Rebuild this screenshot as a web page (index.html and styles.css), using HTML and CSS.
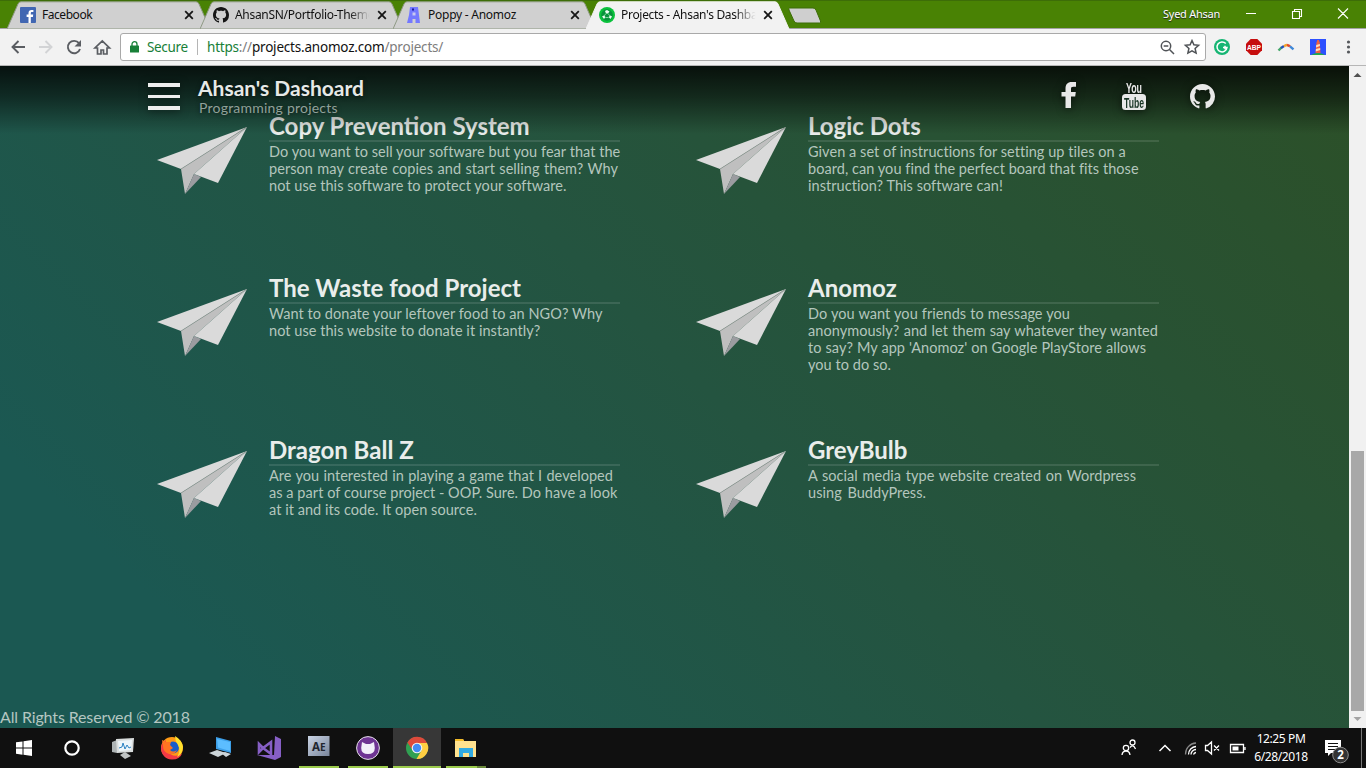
FILE: index.html
```html
<!DOCTYPE html>
<html lang="en">
<head>
<meta charset="utf-8">
<title>Projects - Ahsan's Dashboard</title>
<link rel="stylesheet" href="styles.css">
</head>
<body>
<svg class="defs" width="0" height="0">
  <defs>
    <symbol id="tab" viewBox="0 0 204 28"><path d="M0 28 11 3Q12 .8 14 .8H189Q191 .8 192 3L203 28Z"/></symbol>
    <symbol id="x" viewBox="0 0 10 10"><path d="M1.2 1.2 8.8 8.8M8.8 1.2 1.2 8.8" fill="none" stroke="#161616" stroke-width="1.8"/></symbol>
    <symbol id="github" viewBox="0 0 16 16"><path d="M8 0C3.58 0 0 3.58 0 8c0 3.54 2.29 6.53 5.47 7.59.4.07.55-.17.55-.38 0-.19-.01-.82-.01-1.49-2.01.37-2.53-.49-2.69-.94-.09-.23-.48-.94-.82-1.13-.28-.15-.68-.52-.01-.53.63-.01 1.08.58 1.23.82.72 1.21 1.87.87 2.33.66.07-.52.28-.87.51-1.07-1.78-.2-3.64-.89-3.64-3.95 0-.87.31-1.59.82-2.15-.08-.2-.36-1.02.08-2.12 0 0 .67-.21 2.2.82.64-.18 1.32-.27 2-.27s1.36.09 2 .27c1.53-1.04 2.2-.82 2.2-.82.44 1.1.16 1.92.08 2.12.51.56.82 1.27.82 2.15 0 3.07-1.87 3.75-3.65 3.95.29.25.54.73.54 1.48 0 1.07-.01 1.93-.01 2.2 0 .21.15.46.55.38A8.01 8.01 0 0 0 16 8c0-4.42-3.58-8-8-8z"/></symbol>
    <symbol id="plane" viewBox="0 0 90 67">
      <path d="M0 33 90 0 24 42Z" fill="#dadada"/>
      <path d="M24 42 90 0 37 47 28 67Z" fill="#bfbfbf"/>
      <path d="M37 47 44 50 28 67Z" fill="#9b9ca0"/>
      <path d="M90 0 37 47 61 56Z" fill="#dadada"/>
      <path d="M24 42 90 0" stroke="#87918c" stroke-width=".6"/>
    </symbol>
  </defs>
</svg>

<header class="tabstrip">
  <div class="tab"><svg class="shape"><use href="#tab"/></svg>
    <svg class="fav" viewBox="0 0 16 16"><rect width="16" height="16" rx="1" fill="#4167b2"/><path d="M8.500 16V10H6.600V7.600h1.900V6c0-2 1.200-3.100 3-3.100l1.900.1v2.100H12c-1 0-1.200.5-1.200 1.200v1.300h2.400l-.3 2.400h-2.100v6z" fill="#fff"/></svg>
    <span class="label t1">Facebook</span><svg class="close"><use href="#x"/></svg></div>
  <div class="tab"><svg class="shape"><use href="#tab"/></svg>
    <svg class="fav" viewBox="0 0 16 16"><use href="#github" fill="#151515"/></svg>
    <span class="label fade t2">AhsanSN/Portfolio-Theme</span><svg class="close"><use href="#x"/></svg></div>
  <div class="tab"><svg class="shape"><use href="#tab"/></svg>
    <svg class="fav" viewBox="0 0 16 16"><path d="M4 0h8l1 8 1 8H9.500v-4h-3v4H1L3 8z" fill="#7479ff"/><rect x="6.500" y="5.500" width="3" height="3" fill="#c9caf0"/><rect x="6" y="1.500" width="2" height="2" fill="#1c1b9c"/></svg>
    <span class="label t3">Poppy - Anomoz</span><svg class="close"><use href="#x"/></svg></div>
  <div class="tab active"><svg class="shape"><use href="#tab"/></svg>
    <svg class="fav" viewBox="0 0 16 16"><circle cx="8" cy="8" r="8" fill="#0ac23c"/><circle cx="8" cy="8" r="5.800" fill="#07933a"/><path d="M3 9.500 5 8.500 6.500 10 5 12zM9.500 10l2-1.500 1.500 1-1.500 2.500zM6 4l2-1 2.500 1.500L9 6.500H7z" fill="#e9fff0"/><path d="M7 6.500 5 9M9 6.500 11 9M6.500 10.500h3" stroke="#9be8b4" stroke-width=".8"/></svg>
    <span class="label fade t4">Projects - Ahsan's Dashbaord</span><svg class="close"><use href="#x"/></svg></div>
  <svg class="newtab" viewBox="0 0 34 17"><path d="M1.500 1H25q2 0 3 2l4.500 11q.5 2-1 2H9q-2 0-3-2L1 3Q.5 1 1.500 1Z" fill="#cfcfcf" stroke="#3d6d08"/></svg>
  <span class="user">Syed Ahsan</span>
  <svg class="winctl" viewBox="0 0 104 14"><g fill="none" stroke="#fff" stroke-width="1.100"><path d="M0 7.500h10M46.500 5.500h7v7h-7zM48.500 5.500v-2h7v7h-2M92 2.500l10 10M102 2.500l-10 10"/></g></svg>
</header>

<nav class="toolbar">
  <svg class="navicons" viewBox="0 0 104 20">
    <path d="M17 10H4.500M10.500 4 4.500 10l6 6" class="ni"/>
    <path d="M31 10h12.500M37.500 4l6 6-6 6" class="ni off"/>
    <path d="M71 6.200A6.200 6.200 0 1 0 72 12" class="ni"/><path d="M73 3v6.500h-6.500z" fill="#5a5d62"/>
    <path d="M87 11h2.500v6h3.500v-4h2.500v4h3.500v-6h2.500L94.300 4z" class="ni thin"/>
  </svg>
  <div class="omnibox">
    <svg class="lock" viewBox="0 0 9 12"><rect y="4.500" width="9" height="7" rx=".6" fill="#188038"/><path d="M2 5V3.200a2.500 2.500 0 0 1 5 0V5" fill="none" stroke="#188038" stroke-width="1.300"/></svg>
    <span class="secure">Secure</span><span class="sep"></span>
    <span class="url"><span class="https">https</span><span class="dim">://</span>projects.anomoz.com<span class="dim">/projects/</span></span>
    <svg class="omni-icons" viewBox="0 0 42 18"><g fill="none" stroke="#505357" stroke-width="1.500"><circle cx="7" cy="8" r="4.700"/><path d="M10.500 11.500 15 16M4.700 8h4.600M33 2.500l1.900 4.300 4.700.5-3.500 3.200 1 4.600L33 12.800l-4.100 2.300 1-4.600-3.500-3.200 4.700-.5z"/></g></svg>
  </div>
  <svg class="ext" viewBox="0 0 150 20">
    <circle cx="9" cy="10" r="8" fill="#16b573"/><path d="M12.800 6.600A5 5 0 1 0 14 10.500h-4M12 8.800v3.400" fill="none" stroke="#fff" stroke-width="1.500"/>
    <path d="M37.700 2h6.600L49 6.700v6.600L44.300 18h-6.600L33 13.300V6.700z" fill="#c60d0d"/><text x="41" y="13" class="abp" textLength="14" lengthAdjust="spacingAndGlyphs">ABP</text>
    <g fill="none" stroke-width="2.400"><path d="M65.500 13.500l3-3" stroke="#43a668"/><path d="M68 11l3-2" stroke="#2454b8"/><path d="M71 9.200q2-1.200 3-1.200" stroke="#f3a32c"/><path d="M74 8q2 .3 3 1.500" stroke="#e34b2b"/><path d="M77 9.300l3.500 3" stroke="#4088d8"/></g>
    <rect x="97" y="2" width="16" height="16" fill="#2d50ff"/><path d="M98 18q7-4 14 0z" fill="#23aa49"/><path d="M103.500 5.500l.8-2.500h1.600l.8 2.500.8 10.500h-5z" fill="#ee6041"/><path d="M103.200 8l3.700-1v2l-3.900 1.500zM102.900 12l4.300-1v2l-4.500 1.500z" fill="#ffdcb8"/>
    <g fill="#55585c"><circle cx="135.500" cy="5" r="1.600"/><circle cx="135.500" cy="10" r="1.600"/><circle cx="135.500" cy="15" r="1.600"/></g>
  </svg>
</nav>

<div class="window">
  <main class="page">
    <div class="topbar">
      <div class="burger"><i></i><i></i><i></i></div>
      <div class="brand"><h1>Ahsan's Dashoard</h1><p>Programming projects</p></div>
      <div class="social">
        <svg class="s-fb" viewBox="0 0 16 26"><path d="M4.500 26V14.500H.5V10h4V6.500C4.500 2.300 6.700 0 10.600 0H15v4.700h-2.700c-1.900 0-2.300.8-2.300 2.300v3h4.800l-.6 4.500H10V26z"/></svg>
        <svg class="s-yt" viewBox="0 0 24 28"><text x="12" y="10.800" class="you" textLength="16" lengthAdjust="spacingAndGlyphs">You</text><rect y="12" width="24" height="16" rx="3.500"/><text x="12" y="25.500" class="tube" textLength="20" lengthAdjust="spacingAndGlyphs">Tube</text></svg>
        <svg class="s-gh" viewBox="0 0 16 16"><use href="#github"/></svg>
      </div>
    </div>
    <section class="projects">
      <article><svg class="plane"><use href="#plane"/></svg><div class="info"><h2>Copy Prevention System</h2>
        <p><span class="w351">Do you want to sell your software but you fear that the</span><span class="w349">person may create copies and start selling them? Why</span><span class="w295">not use this software to protect your software.</span></p></div></article>
      <article><svg class="plane"><use href="#plane"/></svg><div class="info"><h2>Logic Dots</h2>
        <p><span class="w316">Given a set of instructions for setting up tiles on a</span><span class="w329">board, can you find the perfect board that fits those</span><span class="w193">instruction? This software can!</span></p></div></article>
      <article><svg class="plane"><use href="#plane"/></svg><div class="info"><h2>The Waste food Project</h2>
        <p><span class="w329">Want to donate your leftover food to an NGO? Why</span><span class="w269">not use this website to donate it instantly?</span></p></div></article>
      <article><svg class="plane"><use href="#plane"/></svg><div class="info"><h2>Anomoz</h2>
        <p><span class="w262">Do you want you friends to message you</span><span class="w350">anonymously? and let them say whatever they wanted</span><span class="w338">to say? My app 'Anomoz' on Google PlayStore allows</span><span class="w82">you to do so.</span></p></div></article>
      <article><svg class="plane"><use href="#plane"/></svg><div class="info"><h2>Dragon Ball Z</h2>
        <p><span class="w344">Are you interested in playing a game that I developed</span><span class="w348">as a part of course project - OOP. Sure. Do have a look</span><span class="w207">at it and its code. It open source.</span></p></div></article>
      <article><svg class="plane"><use href="#plane"/></svg><div class="info"><h2>GreyBulb</h2>
        <p><span class="w328">A social media type website created on Wordpress</span><span class="w118">using BuddyPress.</span></p></div></article>
    </section>
    <footer>All Rights Reserved © 2018</footer>
  </main>
  <div class="scrollbar"><svg viewBox="0 0 17 17"><path d="M4.500 11 8.500 7l4 4z" fill="#505050"/></svg><div class="thumb"></div><svg viewBox="0 0 17 17"><path d="M4.500 6 8.500 10l4-4z" fill="#a3a3a3"/></svg></div>
</div>

<div class="taskbar">
  <div class="apps">
    <div><svg viewBox="0 0 24 24"><path d="M4 6.300 10.500 5.400V11.500H4zM11.500 5.200 20 4v7.500h-8.500zM4 12.500h6.500v6.200L4 17.800zM11.500 12.500H20V20l-8.500-1.200z" fill="#fff"/></svg></div>
    <div><svg viewBox="0 0 24 24"><circle cx="11" cy="12" r="6.700" fill="none" stroke="#fff" stroke-width="2.200"/></svg></div>
    <div><svg viewBox="0 0 24 24"><path d="M2 6l5-2v13l-5-1z" fill="#aeb4b5"/><path d="M6 3l18-1-1 14-16 1z" fill="#d9dddd"/><path d="M8 5l14-1-.7 10L9 15z" fill="#eef6fa"/><path d="M9 12l3-1 1-4 2 6 2-4 2 3 2-1" fill="none" stroke="#2c83c3"/><path d="M10 19l5-3 6 4-6 3z" fill="#bfc3c3"/></svg></div>
    <div><svg viewBox="0 0 24 24"><circle cx="13" cy="12" r="11" fill="#ff9a16"/><path d="M3 8a11 11 0 0 0 10 15.500q8 0 10-6-6 4-11 1L6 12l1-8z" fill="#f33a45"/><circle cx="14" cy="11.500" r="6" fill="#185dc9"/><path d="M3 4l4 2 5 0-1 3 3 3-3 2q3 3 7 0-2 5-8 4-6-2-6-8z" fill="#ff7422"/><path d="M16 0q7 4 8 11-1 8-6 10 4-6 1-12-3-4-3-9z" fill="#ffe12d"/></svg></div>
    <div><svg viewBox="0 0 24 24"><path d="M8 1l15 4v12L8 13z" fill="#3c9fe8"/><path d="M9 3l13 3v9L10 11.500z" fill="#5cbdff"/><path d="M1 17l8-3 9 3-8 4zM13 17l4-1 6 2-5 3z" fill="#cdd5d9"/></svg></div>
    <div><svg viewBox="0 0 24 24"><path d="M18 0l6 3v18l-6 3L0 19l17 0z" fill="#865fc5"/><path d="M2 8l4 4 8-6v12l-8-6-4 4z" fill="none" stroke="#865fc5" stroke-width="2.600"/></svg></div>
    <div class="open"><svg class="ae" viewBox="0 0 24 24"><defs><linearGradient id="aeg" x2="1" y2="1"><stop stop-color="#cad4e5"/><stop offset="1" stop-color="#79859a"/></linearGradient></defs><rect x="1" y="0" width="21.500" height="20" fill="url(#aeg)"/><text x="11.800" y="15">A<tspan font-size="10">E</tspan></text></svg></div>
    <div class="open"><svg viewBox="0 0 24 24"><circle cx="12" cy="12" r="11.400" fill="#6e3493" stroke="#e4e0e8"/><path d="M6 6l4 2h4l4-2 .8 6q0 6-6.800 6T5.200 12z" fill="#f2effa"/></svg></div>
    <div class="open current"><svg viewBox="0 0 24 24"><circle cx="12" cy="12" r="11" fill="#30a052"/><path d="M2.400 6.600A11 11 0 0 1 22 7H12l-4.500 7z" fill="#dd4a3b"/><path d="M22 7a11 11 0 0 1-10.500 16l5-8.500L12 7z" fill="#ffce42"/><circle cx="12" cy="12" r="5.300" fill="#f3f3f3"/><circle cx="12" cy="12" r="4.200" fill="#438bf4"/></svg></div>
    <div class="open folder"><svg viewBox="0 0 24 24"><path d="M1 3h8l1 2h12v16H1z" fill="#ffe28f"/><path d="M1 3h8l1 2H1z" fill="#f3bb28"/><path d="M5 12h14v9h-4v-4H9v4H5z" fill="#31aae2"/></svg></div>
  </div>
  <div class="tray">
    <svg class="trayicons" viewBox="0 0 126 20"><g fill="none" stroke="#fff" stroke-width="1.300">
      <circle cx="11.500" cy="4.500" r="2.500"/><path d="M9 9.500q3-4 5.500 1.500"/><circle cx="5" cy="10" r="2.700"/><path d="M1 17q.5-4 4-4t4 4"/>
      <path d="M38.500 13l5.500-5.500 5.500 5.500" stroke-width="1.500"/>
      <path d="M64.500 16.500A11 11 0 0 1 75 5" stroke="#888"/><path d="M67.500 16.500A8 8 0 0 1 75 8.500M70 16.500A5 5 0 0 1 75 11.500M72.500 16.500A3 3 0 0 1 75 14.500"/>
      <path d="M84.500 7.500h2L90.500 4v12l-4-3.500h-2zM93 7.500l5 5M98 7.500l-5 5"/>
      <path d="M109.500 6.500h13v8h-13zM124 9v3"/></g><path d="M111.500 8.500h6v4h-6z" fill="#fff"/></svg>
    <div class="clock"><span>12:25 PM</span><span class="date">6/28/2018</span></div>
    <svg class="notif" viewBox="0 0 26 28"><path d="M1 1h16v13H7l-3 3v-3H1z" fill="#fff"/><path d="M4 4.500h10M4 7.500h10M4 10.500h7" stroke="#101010"/><circle cx="16.500" cy="16" r="7.800" fill="#333" stroke="#8c8c8c"/><text x="16.500" y="20">2</text></svg>
    <div class="peek"></div>
  </div>
</div>
</body>
</html>
```
FILE: styles.css
```css
* { box-sizing: border-box; }
body { margin: 0; width: 1366px; height: 768px; overflow: hidden; display: flex; flex-direction: column; font-family: "Noto Sans", sans-serif; font-size: 12px; }
h1, h2, p { margin: 0; }
svg { display: block; flex: none; }
.defs { position: absolute; }

/* browser tabs */
.tabstrip { height: 29px; flex: none; background: #498204; border-top: 1px solid #3d6d08; border-bottom: 1px solid #a3a3a3; display: flex; padding-left: 7px; }
.tab { position: relative; width: 204px; height: 28px; margin-right: -11px; display: flex; align-items: center; padding-left: 13px; flex: none; }
.tab .shape { position: absolute; left: 0; top: 0; width: 204px; height: 28px; fill: #d0d0d0; stroke: #8f9a85; stroke-width: 1; }
.tab.active { z-index: 1; }
.tab.active .shape { fill: #f2f2f2; stroke: #f2f2f2; }
.fav { position: relative; width: 16px; height: 16px; margin-right: 6px; }
.label { position: relative; width: 136px; white-space: nowrap; overflow: hidden; color: #111; line-height: 18px; }
.fade { -webkit-mask-image: linear-gradient(90deg, #000 84%, transparent 99%); mask-image: linear-gradient(90deg, #000 84%, transparent 99%); }
.t1 { letter-spacing: -.45px; }
.t2 { letter-spacing: -.3px; }
.t3 { letter-spacing: -.25px; }
.t4 { letter-spacing: -.3px; }
.close { position: relative; width: 10px; height: 10px; margin-left: 6px; }
.newtab { width: 34px; height: 17px; margin: 6px 0 0 9px; }
.user { margin: 4px 0 0 341px; width: 57px; white-space: nowrap; color: #fff; font-size: 11px; line-height: 18px; letter-spacing: -.25px; text-shadow: 0 1px 1px #222; }
.winctl { width: 104px; height: 14px; margin: 5px 0 0 26px; }

/* address bar */
.toolbar { height: 37px; flex: none; background: #f2f2f2; border-bottom: 1px solid #b6b6b6; display: flex; align-items: center; padding-left: 8px; }
.navicons { width: 104px; height: 20px; }
.ni { fill: none; stroke: #5a5d62; stroke-width: 1.9; }
.ni.off { stroke: #d2d3d5; }
.ni.thin { stroke-width: 1.7; }
.omnibox { margin-left: 8px; width: 1086px; height: 28px; background: #fff; border: 1px solid #a9a9a9; border-radius: 3px; display: flex; align-items: center; white-space: nowrap; font-size: 13.5px; }
.lock { width: 9px; height: 12px; margin-left: 9px; }
.secure { color: #188038; margin-left: 8px; width: 42px; letter-spacing: -.35px; }
.sep { width: 1px; height: 16px; background: #b5b5b5; margin: 0 9px 0 8px; }
.url { letter-spacing: -.2px; flex: 1; color: #111; }
.https { color: #188038; }
.dim { color: #7d7d7d; }
.omni-icons { width: 42px; height: 18px; margin-right: 4px; }
.ext { width: 150px; height: 20px; margin-left: 7px; }
.abp { font: bold 8px "Liberation Sans", sans-serif; fill: #fff; text-anchor: middle; }

/* page */
.window { height: 662px; flex: none; display: flex; }
.page { position: relative; width: 1349px; background: linear-gradient(45deg, #1b5852 0%, #1b5852 14%, #245440 52%, #2c5028 100%); font-family: Lato, sans-serif; display: flex; flex-direction: column; }
.topbar { position: absolute; z-index: 2; left: 0; top: 0; width: 100%; height: 68px; background: linear-gradient(rgba(0,0,0,.8), rgba(0,0,0,.5) 45%, rgba(0,0,0,0)); display: flex; padding: 10px 134px 0 148px; }
.burger { width: 32px; height: 27px; margin-top: 7px; display: flex; flex-direction: column; justify-content: space-between; filter: drop-shadow(0 1px 4px #0009); }
.burger i { height: 4px; background: #eee; }
.burger i:nth-child(2) { height: 3px; }
.brand { margin-left: 18px; width: 180px; white-space: nowrap; text-shadow: 0 1px 4px #0009; }
.brand h1 { font-size: 21px; line-height: 23px; color: #e6e9e7; }
.brand p { font-size: 14px; line-height: 18px; margin: 0 0 0 1px; color: #91a19a; letter-spacing: .22px; }
.social { margin-left: auto; display: flex; fill: #e8e8e8; filter: drop-shadow(0 1px 4px #0009); }
.s-fb { width: 16px; height: 26px; margin: 6px 45px 0 0; }
.s-yt { width: 24px; height: 28px; margin: 6px 44px 0 0; overflow: visible; }
.s-gh { width: 25px; height: 25px; margin-top: 8px; }
.you { font: bold 15px "Liberation Sans", sans-serif; text-anchor: middle; }
.tube { font: bold 15px "Liberation Sans", sans-serif; text-anchor: middle; fill: #183524; }
.projects { display: grid; grid-template-columns: 539px 539px; grid-auto-rows: 162px; padding: 48px 0 0 157px; }
article { display: flex; }
.plane { width: 90px; height: 67px; margin: 13px 22px 0 0; }
.info { width: 351px; }
.info h2 { height: 28px; line-height: 23px; font-size: 24px; color: #e9edeb; border-bottom: 2px solid #ffffff1c; white-space: nowrap; }
.info p { font-size: 14.5px; line-height: 17px; margin-top: 1px; color: #b4c6bd; display: flex; flex-direction: column; letter-spacing: .05px; }
.info p span { white-space: nowrap; text-align-last: justify; }
.w351 { width: 351px; } .w350 { width: 350px; } .w349 { width: 349px; } .w348 { width: 348px; }
.w344 { width: 344px; } .w338 { width: 338px; } .w329 { width: 329px; } .w328 { width: 328px; }
.w316 { width: 316px; } .w295 { width: 295px; } .w269 { width: 269px; } .w262 { width: 262px; }
.w207 { width: 207px; } .w193 { width: 193px; } .w118 { width: 118px; } .w82 { width: 82px; }
footer { margin: auto 0 1px; font-size: 16px; line-height: 20px; color: #b4c6c1; letter-spacing: -.13px; }
.scrollbar { width: 17px; background: #f1f1f1; display: flex; flex-direction: column; }
.scrollbar svg { width: 17px; height: 17px; }
.thumb { width: 13px; height: 260px; margin: auto 2px 0; background: #a8a8a8; }

/* taskbar */
.taskbar { height: 40px; flex: none; background: #101010; color: #fff; display: flex; justify-content: space-between; }
.apps { display: flex; }
.apps > div { width: 48px; margin-right: 1.1px; height: 40px; padding: 8px 12px 0; position: relative; }
.apps svg { width: 24px; height: 24px; }
.open::after { content: ""; position: absolute; left: 4px; right: 4px; bottom: 0; height: 2px; background: #9bcb4c; }
.current { background: #373737; }
.current::after { left: 0; right: 0; }
.folder::after { background: linear-gradient(90deg, #9bcb4c 78%, #6b8a3b 78%); }
.ae text { font: bold 11.5px "Noto Sans", sans-serif; fill: #22262e; text-anchor: middle; }
.tray { display: flex; }
.trayicons { width: 126px; height: 20px; margin-top: 10px; }
.clock { width: 56px; margin-left: 6px; display: flex; flex-direction: column; align-items: center; line-height: 18px; padding-top: 2px; letter-spacing: -.4px; white-space: nowrap; }
.notif { width: 26px; height: 28px; margin: 11px 0 0 15px; }
.notif text { font: bold 11.5px "Noto Sans", sans-serif; fill: #fff; text-anchor: middle; }
.peek { width: 1px; background: #777; margin: 0 4px 0 11px; }
```
